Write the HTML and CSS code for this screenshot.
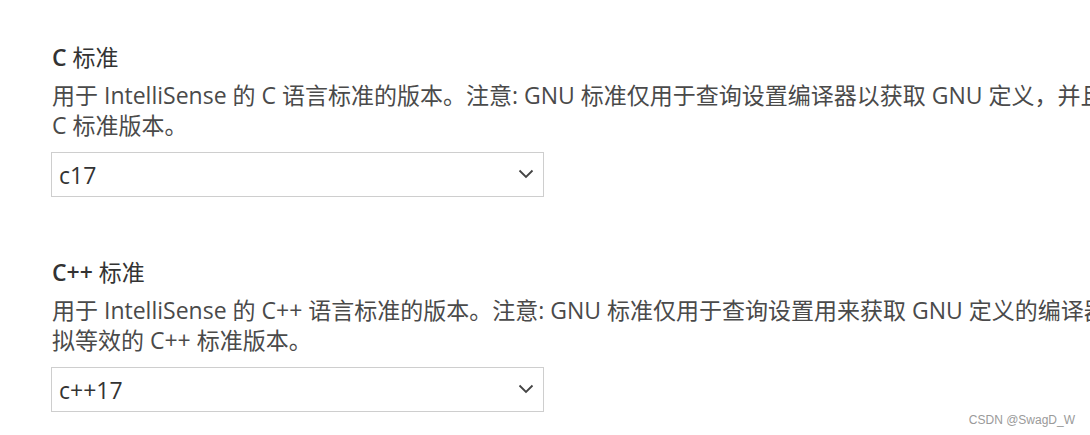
FILE: index.html
```html
<!DOCTYPE html>
<html lang="zh-CN">
<head>
<meta charset="utf-8">
<title>C/C++ 标准</title>
<link rel="stylesheet" href="styles.css">
</head>
<body>
<main class="settings">
  <section class="setting">
    <div class="title"><span class="latin">C</span> 标准</div>
    <div class="desc">
      <div class="line">用于 IntelliSense 的 C 语言标准的版本。注意: GNU 标准仅用于查询设置编译器以获取 GNU 定义，并且 IntelliSense 将模拟等效的</div>
      <div class="line">C 标准版本。</div>
    </div>
    <div class="select">
      <span class="value">c17</span>
      <svg class="chevron" width="16" height="10" viewBox="0 0 16 10"><path d="M1.5 1.5 L8 8 L14.5 1.5" fill="none" stroke="#444" stroke-width="1.8"/></svg>
    </div>
  </section>
  <section class="setting">
    <div class="title"><span class="latin">C++</span> 标准</div>
    <div class="desc">
      <div class="line">用于 IntelliSense 的 C++ 语言标准的版本。注意: GNU 标准仅用于查询设置用来获取 GNU 定义的编译器，并且 IntelliSense 将模</div>
      <div class="line">拟等效的 C++ 标准版本。</div>
    </div>
    <div class="select">
      <span class="value">c++17</span>
      <svg class="chevron" width="16" height="10" viewBox="0 0 16 10"><path d="M1.5 1.5 L8 8 L14.5 1.5" fill="none" stroke="#444" stroke-width="1.8"/></svg>
    </div>
  </section>
</main>
<div class="watermark">CSDN @SwagD_W</div>
</body>
</html>
```

FILE: styles.css
```css
html, body {
  margin: 0;
  padding: 0;
  overflow: hidden;
  background: #ffffff;
}
body {
  width: 1090px;
  height: 435px;
  position: relative;
  font-family: "Open Sans", "Noto Sans CJK SC", sans-serif;
  color: #3c3c3c;
}
.settings {
  display: flex;
  flex-direction: column;
  gap: 62px;
  padding: 44px 0 0 52px;
}
.setting {
  display: flex;
  flex-direction: column;
}
.title {
  font-size: 23px;
  line-height: 26px;
  color: #333333;
}
.title .latin {
  font-weight: 600;
}
.desc {
  margin-top: 10px;
  font-size: 23px;
  line-height: 30px;
  color: #4a4a4a;
}
.line {
  white-space: nowrap;
}
.select {
  margin-top: 12px;
  margin-left: -1px;
  height: 43px;
  border: 1px solid #cecece;
  display: flex;
  align-items: center;
  justify-content: space-between;
  padding: 0 9px 0 7px;
  box-sizing: content-box;
  width: 475px;
}
.value {
  font-size: 23px;
  color: #333333;
}
.chevron {
  display: block;
  margin-top: -2px;
}
.watermark {
  position: absolute;
  right: 15px;
  bottom: 8px;
  font-family: "Liberation Sans", Arial, sans-serif;
  font-size: 12px;
  color: #9a9a9a;
}
```
